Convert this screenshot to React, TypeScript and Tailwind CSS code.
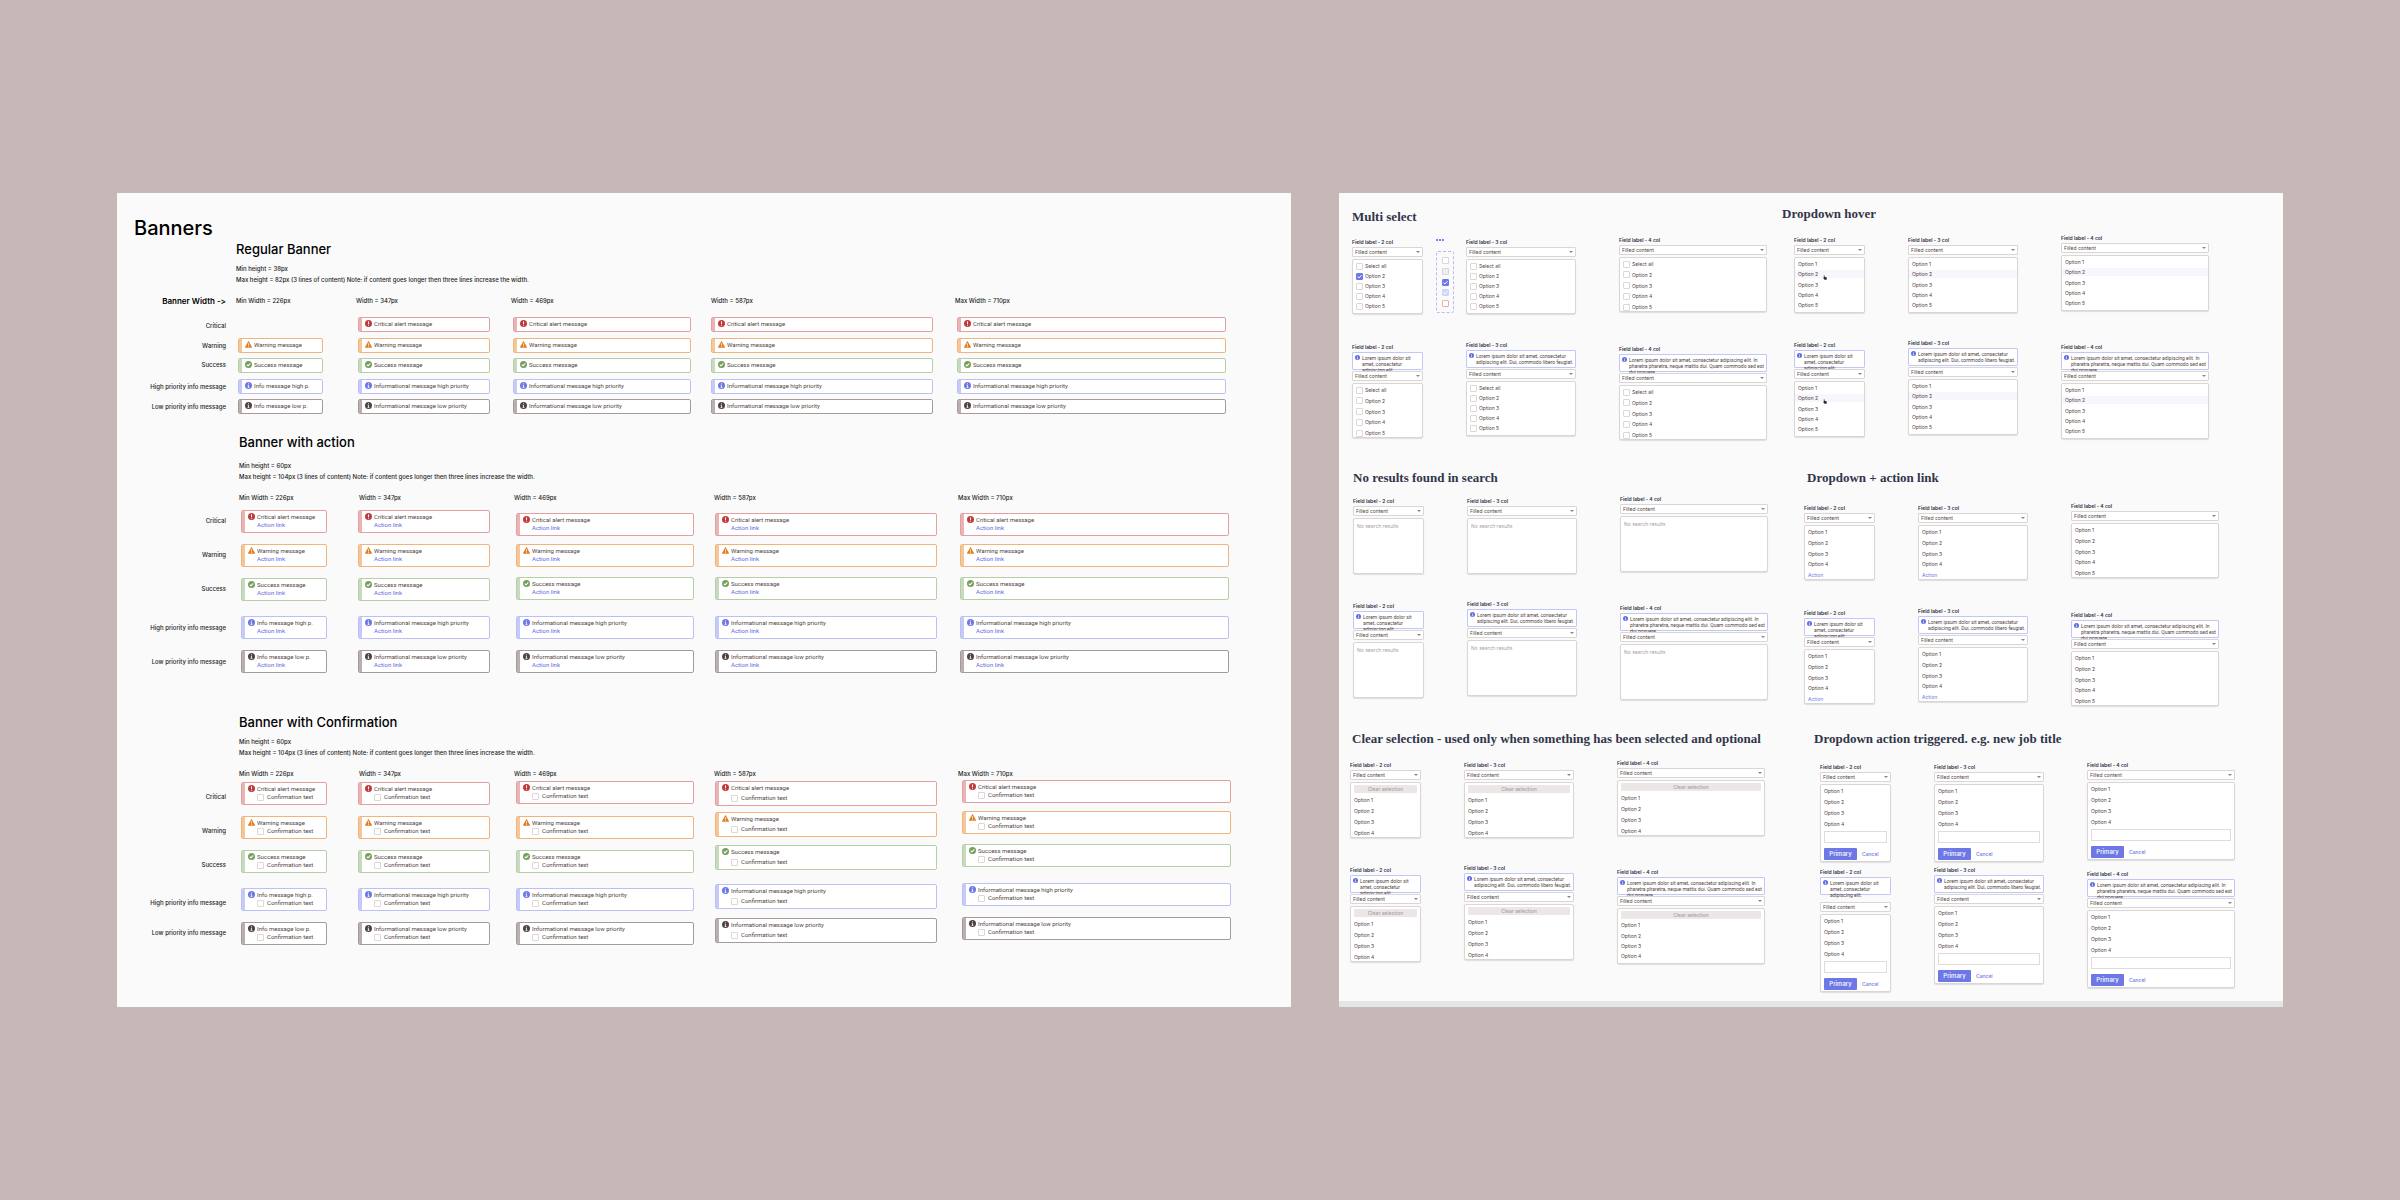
import React, { useId } from "react";

type Tone = "critical" | "warning" | "success" | "high" | "low";

const TONES: Record<Tone, { border: string; strip: string; icon: string; text: string; short: string }> = {
  critical: {
    border: "border-[#e2a0a1]",
    strip: "bg-[#eab3b4]",
    icon: "text-[#c23b3c]",
    text: "Critical alert message",
    short: "Critical alert message",
  },
  warning: {
    border: "border-[#efb57c]",
    strip: "bg-[#f5c698]",
    icon: "text-[#e07a1a]",
    text: "Warning message",
    short: "Warning message",
  },
  success: {
    border: "border-[#b7cfa9]",
    strip: "bg-[#c8dabd]",
    icon: "text-[#769f5e]",
    text: "Success message",
    short: "Success message",
  },
  high: {
    border: "border-[#bcc0f4]",
    strip: "bg-[#c6caf8]",
    icon: "text-[#6d78e6]",
    text: "Informational message high priority",
    short: "Info message high p.",
  },
  low: {
    border: "border-[#a69b9b]",
    strip: "bg-[#b9afaf]",
    icon: "text-[#514141]",
    text: "Informational message low priority",
    short: "Info message low p.",
  },
};

const ORDER: Tone[] = ["critical", "warning", "success", "high", "low"];
const ROW_NAMES = ["Critical", "Warning", "Success", "High priority info message", "Low priority info message"];
const WIDTHS = ["Min Width = 226px", "Width = 347px", "Width = 469px", "Width = 587px", "Max Width = 710px"];

function ToneIcon({ tone, className }: { tone: Tone; className: string }) {
  if (tone === "warning") {
    return (
      <svg viewBox="0 0 16 16" className={className} aria-hidden="true">
        <path d="M8 0.6 15.8 15H0.2z" fill="currentColor" stroke="currentColor" strokeLinejoin="round" />
        <path d="M8 5.5v4.8M8 11.8v1.8" stroke="#fff" strokeWidth="1.9" />
      </svg>
    );
  }
  return (
    <svg viewBox="0 0 16 16" className={className} aria-hidden="true">
      <circle cx="8" cy="8" r="8" fill="currentColor" />
      {tone === "critical" && <path d="M8 3.2v5.8M8 10.8v2.2" stroke="#fff" strokeWidth="2.2" />}
      {tone === "success" && <path d="M4 8.3 7 11.2 12.2 5.4" fill="none" stroke="#fff" strokeWidth="2.3" />}
      {(tone === "high" || tone === "low") && (
        <path d="M8 3v2.2M6.2 7.4H8v4.6M5.9 12.4h4.2" fill="none" stroke="#fff" strokeWidth="1.9" />
      )}
    </svg>
  );
}

function Check({
  id,
  checked = false,
  disabled = false,
  error = false,
  label,
}: {
  id?: string;
  checked?: boolean;
  disabled?: boolean;
  error?: boolean;
  label?: string;
}) {
  const look = error
    ? "border-[#efb0aa] bg-white"
    : disabled
      ? "border-[#d8d5d5] bg-[#efeeee] checked:border-[#d0d3fb] checked:bg-[#d0d3fb]"
      : "border-[#dcd8d8] bg-white checked:border-[#6d78e6] checked:bg-[#6d78e6]";
  return (
    <span className="relative block size-[7px] shrink-0">
      <input
        id={id}
        type="checkbox"
        defaultChecked={checked}
        disabled={disabled}
        aria-label={label}
        className={`peer block size-[7px] appearance-none rounded-[1px] border ${look}`}
      />
      <svg viewBox="0 0 7 7" className="pointer-events-none absolute inset-0 hidden size-[7px] peer-checked:block" aria-hidden="true">
        <path d="M1.5 3.6 2.9 5 5.6 2.2" fill="none" stroke="#fff" strokeWidth="1" />
      </svg>
    </span>
  );
}

type BannerKind = "regular" | "action" | "confirm";

function Banner({ tone, kind, short, roomy }: { tone: Tone; kind: BannerKind; short?: boolean; roomy?: boolean }) {
  const t = TONES[tone];
  const id = useId();
  return (
    <div className={`flex overflow-hidden rounded-[2px] border bg-white ${t.border}`}>
      <div className={`w-[3px] shrink-0 ${t.strip}`} />
      <div className="flex gap-[2px] pt-[2px] pb-[3px] pl-[3px] font-[Roboto,sans-serif] text-[6px] leading-[8px] font-normal whitespace-nowrap text-[#503f3f]">
        <ToneIcon tone={tone} className={`size-[7px] shrink-0 ${t.icon}`} />
        <div className="flex flex-col">
          <p>{short ? t.short : t.text}</p>
          {kind === "action" && (
            <a href="#action" className="text-[#6266e0]">
              Action link
            </a>
          )}
          {kind === "confirm" && (
            <div className={`flex h-[8px] items-center gap-[3px] ${roomy ? "mt-[2px]" : ""}`}>
              <Check id={id} />
              <label htmlFor={id}>Confirmation text</label>
            </div>
          )}
        </div>
      </div>
    </div>
  );
}

/* Spacing above each card of a column, in the order of ORDER. */
type Steps = string[];

const REGULAR: Steps = ["mt-0", "mt-[6px]", "mt-[5px]", "mt-[6px]", "mt-[5px]"];
const EVEN: Steps = ["mt-0", "mt-[11px]", "mt-[11px]", "mt-[15px]", "mt-[11px]"];
const LOWERED: Steps = ["mt-[3px]", "mt-[8px]", "mt-[10px]", "mt-[16px]", "mt-[11px]"];

function BannerColumn({
  kind,
  steps,
  short,
  roomy,
  skipFirst,
  pad,
}: {
  kind: BannerKind;
  steps: Steps;
  short?: boolean;
  roomy?: boolean;
  skipFirst?: boolean;
  pad: string;
}) {
  return (
    <div className={`flex flex-col ${pad}`}>
      {ORDER.map((tone, i) => (
        <div key={tone} className={steps[i]}>
          {skipFirst && i === 0 ? <div className="h-[15px]" /> : <Banner tone={tone} kind={kind} short={short} roomy={roomy} />}
        </div>
      ))}
    </div>
  );
}

interface BannerSectionProps {
  title: string;
  min: string;
  max: string;
  className: string;
  titlePad: string;
  textPad: string;
  introGap: string;
  headGap: string;
  headPad: string;
  bodyGap: string;
  bodyPad: string;
  tracks: string;
  kind: BannerKind;
  lead?: string;
  labelSteps: Steps;
  columns: { steps: Steps; pad: string; roomy?: boolean }[];
}

function BannerSection(p: BannerSectionProps) {
  return (
    <section className={p.className}>
      <h2 className={`text-[13px] leading-[16px] font-medium text-black ${p.titlePad}`}>{p.title}</h2>
      <div className={`flex flex-col gap-[3px] ${p.introGap} ${p.textPad}`}>
        <p>{p.min}</p>
        <p>{p.max}</p>
      </div>
      <div className={`flex items-center ${p.headGap}`}>
        <div className="w-[109px] shrink-0 text-right text-[8px] font-semibold whitespace-nowrap text-black [font-variant-ligatures:none]">{p.lead}</div>
        <div className={`grid flex-1 grid-cols-[120fr_155fr_200fr_244fr_271fr] ${p.headPad}`}>
          {WIDTHS.map((w) => (
            <div key={w}>{w}</div>
          ))}
        </div>
      </div>
      <div className={`flex ${p.bodyGap}`}>
        <div className="flex w-[109px] shrink-0 flex-col text-right whitespace-nowrap">
          {ROW_NAMES.map((name, i) => (
            <div key={name} className={p.labelSteps[i]}>
              {name}
            </div>
          ))}
        </div>
        <div className={`grid flex-1 ${p.tracks} ${p.bodyPad}`}>
          {p.columns.map((c, i) => (
            <BannerColumn key={i} kind={p.kind} steps={c.steps} pad={c.pad} roomy={c.roomy} short={i === 0} skipFirst={p.kind === "regular" && i === 0} />
          ))}
        </div>
      </div>
    </section>
  );
}

function BannersPanel() {
  return (
    <main className="flex-[1174] bg-[#fafafa] pt-[23px] pb-[62px] font-[Inter,sans-serif] text-[6px] leading-[8px] font-medium text-[#1c1c1c]">
      <h1 className="pl-[17px] text-[20px] leading-[24px] font-medium text-black">Banners</h1>
      <BannerSection
        title="Regular Banner"
        min="Min height = 38px"
        max="Max height = 82px (3 lines of content) Note: if content goes longer then three lines increase the width."
        className="mt-[1px]"
        titlePad="pl-[119px]"
        textPad="pl-[119px]"
        introGap="mt-[8px]"
        headGap="mt-[13px]"
        headPad="pl-[10px] pr-[65px]"
        bodyGap="mt-[12px]"
        bodyPad="pl-[12px] pr-[65px]"
        tracks="grid-cols-[120fr_155fr_198fr_246fr_269fr]"
        kind="regular"
        lead="Banner Width ->"
        labelSteps={["mt-[5px]", "mt-[12px]", "mt-[11px]", "mt-[14px]", "mt-[12px]"]}
        columns={[
          { steps: REGULAR, pad: "pr-[35px]" },
          { steps: REGULAR, pad: "pr-[23px]" },
          { steps: REGULAR, pad: "pr-[20px]" },
          { steps: REGULAR, pad: "pr-[24px]" },
          { steps: REGULAR, pad: "pr-0" },
        ]}
      />
      <BannerSection
        title="Banner with action"
        min="Min height = 60px"
        max="Max height = 104px (3 lines of content) Note: if content goes longer then three lines increase the width."
        className="mt-[20px]"
        titlePad="pl-[122px]"
        textPad="pl-[122px]"
        introGap="mt-[12px]"
        headGap="mt-[13px]"
        headPad="pl-[13px] pr-[62px]"
        bodyGap="mt-[8px]"
        bodyPad="pl-[15px] pr-[62px]"
        tracks="grid-cols-[117fr_158fr_199fr_245fr_269fr]"
        kind="action"
        labelSteps={["mt-[7px]", "mt-[26px]", "mt-[26px]", "mt-[31px]", "mt-[26px]"]}
        columns={[
          { steps: EVEN, pad: "pr-[31px]" },
          { steps: EVEN, pad: "pr-[26px]" },
          { steps: LOWERED, pad: "pr-[21px]" },
          { steps: LOWERED, pad: "pr-[23px]" },
          { steps: LOWERED, pad: "pr-0" },
        ]}
      />
      <BannerSection
        title="Banner with Confirmation"
        min="Min height = 60px"
        max="Max height = 104px (3 lines of content) Note: if content goes longer then three lines increase the width."
        className="mt-[41px]"
        titlePad="pl-[122px]"
        textPad="pl-[122px]"
        introGap="mt-[8px]"
        headGap="mt-[13px]"
        headPad="pl-[13px] pr-[62px]"
        bodyGap="mt-[2px]"
        bodyPad="pl-[15px] pr-[60px]"
        tracks="grid-cols-[117fr_158fr_199fr_247fr_269fr]"
        kind="confirm"
        labelSteps={["mt-[13px]", "mt-[26px]", "mt-[26px]", "mt-[30px]", "mt-[22px]"]}
        columns={[
          { steps: ["mt-[2px]", "mt-[11px]", "mt-[11px]", "mt-[15px]", "mt-[11px]"], pad: "pr-[31px]" },
          { steps: ["mt-[2px]", "mt-[11px]", "mt-[11px]", "mt-[15px]", "mt-[11px]"], pad: "pr-[26px]" },
          { steps: ["mt-[1px]", "mt-[12px]", "mt-[11px]", "mt-[15px]", "mt-[11px]"], pad: "pr-[21px]" },
          { steps: ["mt-[1px]", "mt-[6px]", "mt-[8px]", "mt-[14px]", "mt-[9px]"], pad: "pr-[25px]", roomy: true },
          { steps: ["mt-0", "mt-[8px]", "mt-[10px]", "mt-[16px]", "mt-[11px]"], pad: "pr-0" },
        ]}
      />
    </main>
  );
}

type MenuKind = "multi" | "hover" | "empty" | "action" | "clear" | "form";

const HELP: Record<number, string[]> = {
  2: ["Lorem ipsum dolor sit", "amet, consectetur", "adipiscing elit."],
  3: ["Lorem ipsum dolor sit amet, consectetur", "adipiscing elit. Dui, commodo libero feugiat."],
  4: [
    "Lorem ipsum dolor sit amet, consectetur adipiscing elit. In",
    "pharetra pharetra, neque mattis dui. Quam commodo sed est",
    "dui posuere.",
  ],
};

const OPTION = "flex h-[8px] items-center px-[3px]";

function Pointer() {
  return (
    <svg viewBox="0 0 8 10" className="absolute top-[5px] left-[28px] h-[5px] w-[4px]" aria-hidden="true">
      <path
        d="M2 0.5c1 0 1.2 0.6 1.2 1.4V4l3.4 0.7c0.9 0.2 1.1 0.8 1 1.6L7 9.5H3.2L0.6 6.3C0.8 5.5 1.3 5.5 1.6 5.7V1.4C1.6 0.9 1.5 0.5 2 0.5z"
        fill="#22263a"
      />
    </svg>
  );
}

function Menu({ kind, cols, help }: { kind: MenuKind; cols: number; help: boolean }) {
  const id = useId();
  const frame = "rounded-[2px] border border-[#dad6d6] bg-white shadow-[0_1px_1px_rgba(60,50,50,0.14)] text-[#503f3f]";

  if (kind === "empty") {
    return <div className={`h-[56px] px-[3px] pt-[3px] text-[#a9a0a0] ${frame}`}>No search results</div>;
  }

  if (kind === "form") {
    return (
      <div className={`pt-[2px] pb-px ${frame}`}>
        <ul className="flex flex-col gap-[3px]">
          {[1, 2, 3, 4].map((n) => (
            <li key={n} className={OPTION}>
              Option {n}
            </li>
          ))}
        </ul>
        <div className="px-[3px]">
          <input aria-label="New option" className="mt-[3px] block h-[12px] w-full border border-[#dfdcdc] bg-white px-[2px]" />
          <div className="mt-[5px] flex items-center gap-[5px]">
            <button type="button" className="h-[12px] w-[33px] rounded-[1px] bg-[#6d78e6] text-[6px] font-medium text-white">
              Primary
            </button>
            <button type="button" className="font-medium text-[#6d78e6]">
              Cancel
            </button>
          </div>
        </div>
      </div>
    );
  }

  if (kind === "multi") {
    const loose = cols === 4 || (help && cols === 2);
    return (
      <ul className={`flex h-[55px] flex-col justify-between pt-[2px] ${loose ? "pb-0" : "pb-[3px]"} ${frame}`}>
        {["Select all", "Option 2", "Option 3", "Option 4", "Option 5"].map((o, i) => (
          <li key={o} className="flex h-[8px] items-center gap-[2px] px-[3px]">
            <Check id={`${id}-${i}`} checked={!help && cols === 2 && i === 1} />
            <label htmlFor={`${id}-${i}`}>{o}</label>
          </li>
        ))}
      </ul>
    );
  }

  if (kind === "clear") {
    const tight = help && cols === 4;
    return (
      <div className={`flex h-[56px] flex-col justify-between pt-[2px] ${tight ? "pb-[3px]" : "pb-0"} ${frame}`}>
        <button type="button" className="mx-[3px] h-[8px] rounded-[1px] bg-[#ece6e6] font-medium text-[#a89e9e]">
          Clear selection
        </button>
        {[1, 2, 3, 4].map((n) => (
          <div key={n} className={OPTION}>
            Option {n}
          </div>
        ))}
      </div>
    );
  }

  const hover = kind === "hover";
  return (
    <ul className={`flex flex-col justify-between pt-[2px] ${hover ? "h-[56px] pb-[3px]" : "h-[55px] pb-0"} ${frame}`}>
      {[1, 2, 3, 4, 5].map((n) => (
        <li key={n} className={`${OPTION} relative ${hover && n === 2 ? "bg-[#f6f6fd]" : ""}`}>
          {kind === "action" && n === 5 && cols !== 4 ? (
            <a href="#action" className="text-[#6d78e6]">
              Action
            </a>
          ) : (
            `Option ${n}`
          )}
          {hover && n === 2 && cols === 2 && <Pointer />}
        </li>
      ))}
    </ul>
  );
}

function Field({ kind, cols, help = false }: { kind: MenuKind; cols: number; help?: boolean }) {
  const id = useId();
  const wideGap = kind === "form" && cols === 2;
  return (
    <div className="flex min-w-0 flex-col">
      <label htmlFor={id} className="text-[5px] leading-[6px] font-semibold text-[#2f3347]">
        Field label - {cols} col
      </label>
      {help && (
        <div
          className={`mt-[2px] flex h-[18px] gap-[2px] rounded-[1px] border border-[#c3c7f8] bg-white pt-[2px] pl-[2px] ${wideGap ? "mb-[5px]" : "-mb-px"}`}
        >
          <ToneIcon tone="high" className="size-[5px] shrink-0 text-[#5f6be6]" />
          <p className="flex flex-col font-[Roboto,sans-serif] text-[5px] leading-[6px] whitespace-nowrap text-[#503f3f]">
            {HELP[cols].map((line) => (
              <span key={line}>{line}</span>
            ))}
          </p>
        </div>
      )}
      <div className="relative mt-[2px]">
        <select
          id={id}
          className="block h-[10px] w-full appearance-none rounded-[1px] border border-[#dad6d6] bg-white pl-[2px] text-[5px] leading-[8px] text-[#503f3f]"
        >
          <option>Filled content</option>
        </select>
        <svg viewBox="0 0 4 2" className="pointer-events-none absolute top-[4px] right-[3px] h-[2px] w-[4px]" aria-hidden="true">
          <path d="M0 0H4L2 2z" fill="#8e8383" />
        </svg>
      </div>
      <div className="mt-[2px]">
        <Menu kind={kind} cols={cols} help={help} />
      </div>
    </div>
  );
}

function CheckboxStates() {
  return (
    <div className="absolute top-0 left-full ml-[13px] w-[18px]">
      <div className="flex h-[6px] items-center gap-px">
        <span className="size-[2px] rounded-full bg-[#9333ea]" />
        <span className="size-[2px] rounded-full bg-[#9333ea]" />
        <span className="size-[2px] rounded-full bg-[#9333ea]" />
      </div>
      <div className="mt-[8px] flex h-[62px] flex-col items-center justify-between rounded-[2px] border border-dashed border-[#bdb8f6] py-[5px]">
        <Check label="Unchecked" />
        <Check label="Disabled" disabled />
        <Check label="Checked" checked />
        <Check label="Checked and disabled" checked disabled />
        <Check label="Error" error />
      </div>
    </div>
  );
}

function SelectSection({
  title,
  kind,
  top,
  titlePad,
  groupPad,
  groupGap,
  rowGap,
}: {
  title: string;
  kind: MenuKind;
  top: string;
  titlePad: string;
  groupPad: string;
  groupGap: string;
  rowGap: string;
}) {
  return (
    <section className={top}>
      <h2 className={`font-['Liberation_Serif',serif] text-[13px] leading-[16px] font-bold whitespace-nowrap text-[#31354a] ${titlePad}`}>{title}</h2>
      <div className={`flex flex-col ${groupGap} ${groupPad} ${rowGap}`}>
        <div className="grid grid-cols-[71fr_110fr_148fr] items-start gap-x-[43px]">
          <div className="relative pt-[2px]">
            <Field kind={kind} cols={2} />
            {kind === "multi" && <CheckboxStates />}
          </div>
          <div className="pt-[2px]">
            <Field kind={kind} cols={3} />
          </div>
          <Field kind={kind} cols={4} />
        </div>
        <div className="grid grid-cols-[71fr_110fr_148fr] items-start gap-x-[43px]">
          <div className="pt-[2px]">
            <Field kind={kind} cols={2} help />
          </div>
          <Field kind={kind} cols={3} help />
          <div className="pt-[4px]">
            <Field kind={kind} cols={4} help />
          </div>
        </div>
      </div>
    </section>
  );
}

function SelectsPanel() {
  return (
    <aside className="flex flex-[944] flex-col justify-between bg-[#fafafa] font-[Inter,sans-serif] text-[5px] leading-[8px]">
      <div className="grid grid-cols-[443fr_501fr]">
        <SelectSection title="Multi select" kind="multi" top="pt-[16px]" titlePad="pl-[13px]" groupGap="mt-[12px]" groupPad="pl-[13px] pr-[15px]" rowGap="gap-[28px]" />
        <SelectSection title="Dropdown hover" kind="hover" top="pt-[13px]" titlePad="" groupGap="mt-[13px]" groupPad="pl-[12px] pr-[74px]" rowGap="gap-[27px]" />
        <SelectSection title="No results found in search" kind="empty" top="pt-[30px]" titlePad="pl-[14px]" groupGap="mt-[10px]" groupPad="pl-[14px] pr-[14px]" rowGap="gap-[27px]" />
        <SelectSection title="Dropdown + action link" kind="action" top="pt-[30px]" titlePad="pl-[25px]" groupGap="mt-[17px]" groupPad="pl-[22px] pr-[64px]" rowGap="gap-[28px]" />
        <SelectSection
          title="Clear selection - used only when something has been selected and optional"
          kind="clear"
          top="pt-[25px]"
          titlePad="pl-[13px]"
          groupGap="mt-[13px]"
          groupPad="pl-[11px] pr-[17px]"
          rowGap="gap-[27px]"
        />
        <SelectSection
          title="Dropdown action triggered. e.g. new job title"
          kind="form"
          top="pt-[25px]"
          titlePad="pl-[32px]"
          groupGap="mt-[15px]"
          groupPad="pl-[38px] pr-[48px]"
          rowGap="gap-[5px]"
        />
      </div>
      <div className="h-[6px] bg-[#e5e5e5]" />
    </aside>
  );
}

export default function App() {
  return (
    <div className="flex min-h-screen items-center justify-center bg-[#c5b8b7] px-[117px]">
      <div className="flex w-full items-stretch gap-[48px]">
        <BannersPanel />
        <SelectsPanel />
      </div>
    </div>
  );
}
